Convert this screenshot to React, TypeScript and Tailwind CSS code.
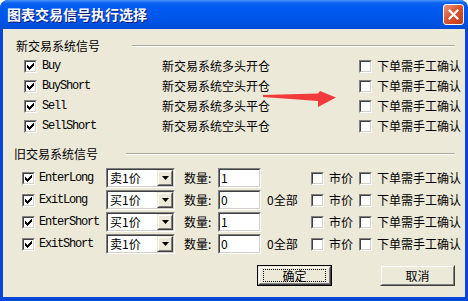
import { ReactNode } from "react";

const cjk = "font-['Noto_Sans_CJK_SC','Noto_Sans',sans-serif]";
const mono = "font-['Liberation_Mono',monospace] text-[12px] tracking-[-1.2px]";

// classic check mark bitmap
const CHECK = ["......#", ".....##", "#...###", "##.###.", "#####..", ".###...", "..#...."];

function Sunken({ className, children }: { className: string; children?: ReactNode }) {
  return (
    <div className={`border border-t-[#808080] border-l-[#808080] border-b-white border-r-white ${className}`}>
      <div className="h-full w-full border border-t-[#404040] border-l-[#404040] border-b-[#D4D0C8] border-r-[#D4D0C8] bg-white">
        {children}
      </div>
    </div>
  );
}

function Check({ on }: { on?: boolean }) {
  return (
    <Sunken className="w-[13px] h-[13px] shrink-0">
      {on && (
        <svg width="9" height="9" viewBox="0 0 9 9" shapeRendering="crispEdges">
          {CHECK.flatMap((row, y) =>
            row.split("").map((c, x) =>
              c === "#" ? <rect key={`${x}-${y}`} x={x + 1} y={y + 1} width="1" height="1" fill="#000" /> : null
            )
          )}
        </svg>
      )}
    </Sunken>
  );
}

function Raised({ className, children }: { className: string; children?: ReactNode }) {
  return (
    <div className={`border border-t-[#ECE9D8] border-l-[#ECE9D8] border-b-[#404040] border-r-[#404040] ${className}`}>
      <div className="h-full w-full border border-t-white border-l-white border-b-[#808080] border-r-[#808080] bg-[#ECE9D8] flex items-center justify-center">
        {children}
      </div>
    </div>
  );
}

function Combo({ value }: { value: string }) {
  return (
    <Sunken className="w-[69px] h-[20px] shrink-0">
      <div className="flex h-full">
        <div className={`flex-1 pl-[2px] text-[12px] leading-[16px] text-black ${cjk}`}>{value}</div>
        <Raised className="w-[16px] h-full">
          <svg width="7" height="4" viewBox="0 0 7 4">
            <path d="M0 0h7L3.5 4z" fill="#000" />
          </svg>
        </Raised>
      </div>
    </Sunken>
  );
}

const newRows = [
  { name: "Buy", desc: "新交易系统多头开仓" },
  { name: "BuyShort", desc: "新交易系统空头开仓" },
  { name: "Sell", desc: "新交易系统多头平仓" },
  { name: "SellShort", desc: "新交易系统空头平仓" },
];

const oldRows = [
  { name: "EnterLong", price: "卖1价", qty: "1", all: false },
  { name: "ExitLong", price: "买1价", qty: "0", all: true },
  { name: "EnterShort", price: "买1价", qty: "1", all: false },
  { name: "ExitShort", price: "卖1价", qty: "0", all: true },
];

function GroupHeader({ label, pad, gap }: { label: string; pad: string; gap: string }) {
  return (
    <div className={`flex items-center h-[14px] pr-[10px] ${pad}`}>
      <span className={`text-[12px] leading-[14px] text-black ${cjk}`}>{label}</span>
      <div className={`flex-1 h-[2px] border-t border-t-[#ACA899] border-b border-b-white ${gap}`} />
    </div>
  );
}

export default function App() {
  return (
    <div className="relative w-[468px] h-[301px] bg-[#0846DA] rounded-t-[8px] overflow-hidden">
      {/* TITLE BAR */}
      <div className="h-[29px] flex items-center justify-between pl-[7px] pr-[4px] rounded-t-[8px] bg-[linear-gradient(to_bottom,#4A95FF_0px,#0C62F0_3px,#005AF2_8px,#0055E8_20px,#004BD6_29px)]">
        <span className={`text-[14px] font-bold text-white [text-shadow:1px_1px_0_#0A1874] ${cjk}`}>
          图表交易信号执行选择
        </span>
        <div className="w-[21px] h-[21px] rounded-[3px] border border-white bg-[linear-gradient(135deg,#E99A7E,#DA5633_45%,#C13A1A)] flex items-center justify-center">
          <svg width="11" height="11" viewBox="0 0 11 11">
            <path d="M1.5 1.5l8 8M9.5 1.5l-8 8" stroke="#fff" strokeWidth="2.2" strokeLinecap="square" />
          </svg>
        </div>
      </div>

      {/* CLIENT */}
      <div className="mx-[3px] h-[268px] bg-[#ECE9D8] flex flex-col pt-[10px]">
        <GroupHeader label="新交易系统信号" pad="pl-[13px]" gap="ml-[32px]" />
        <div className="mt-[3px] flex flex-col">
          {newRows.map((r) => (
            <div key={r.name} className="h-[20px] flex items-center pl-[21px]">
              <Check on />
              <span className={`ml-[5px] w-[120px] text-black ${mono}`}>{r.name}</span>
              <span className={`w-[197px] text-[12px] text-black ${cjk}`}>{r.desc}</span>
              <Check />
              <span className={`ml-[5px] text-[12px] text-black ${cjk}`}>下单需手工确认</span>
            </div>
          ))}
        </div>

        <div className="mt-[11px]">
          <GroupHeader label="旧交易系统信号" pad="pl-[11px]" gap="ml-[28px]" />
        </div>
        <div className="mt-[6px] flex flex-col">
          {oldRows.map((r) => (
            <div key={r.name} className="h-[22px] flex items-center pl-[19px]">
              <Check on />
              <span className={`ml-[4px] w-[67px] text-black ${mono}`}>{r.name}</span>
              <Combo value={r.price} />
              <span className={`ml-[9px] w-[34px] text-[12px] text-black ${cjk}`}>数量:</span>
              <Sunken className="w-[43px] h-[20px] shrink-0">
                <div className={`pl-[1px] text-[12px] leading-[15px] text-black ${cjk}`}>{r.qty}</div>
              </Sunken>
              <span className={`ml-[6px] w-[44px] text-[12px] text-black ${cjk}`}>{r.all ? "0全部" : ""}</span>
              <Check />
              <span className={`ml-[5px] text-[12px] text-black ${cjk}`}>市价</span>
              <div className="ml-[6px]">
                <Check />
              </div>
              <span className={`ml-[5px] text-[12px] text-black ${cjk}`}>下单需手工确认</span>
            </div>
          ))}
        </div>

        {/* BUTTONS */}
        <div className="mt-[10px] flex justify-end gap-[48px] pr-[10px]">
          <div className="w-[75px] h-[21px] border border-black">
            <Raised className="w-full h-full">
              <div className={`w-[63px] h-[13px] border border-dotted border-black flex items-center justify-center text-[12px] text-black ${cjk}`}>
                确定
              </div>
            </Raised>
          </div>
          <Raised className="w-[75px] h-[21px]">
            <span className={`text-[12px] text-black ${cjk}`}>取消</span>
          </Raised>
        </div>
      </div>

      {/* RED ARROW annotation */}
      <svg className="absolute left-0 top-0 pointer-events-none" width="468" height="301">
        <polygon points="263,95 318,93.5 320,91 336,97.5 318,107 318,101 263,97" fill="#F23A3A" />
      </svg>
    </div>
  );
}
